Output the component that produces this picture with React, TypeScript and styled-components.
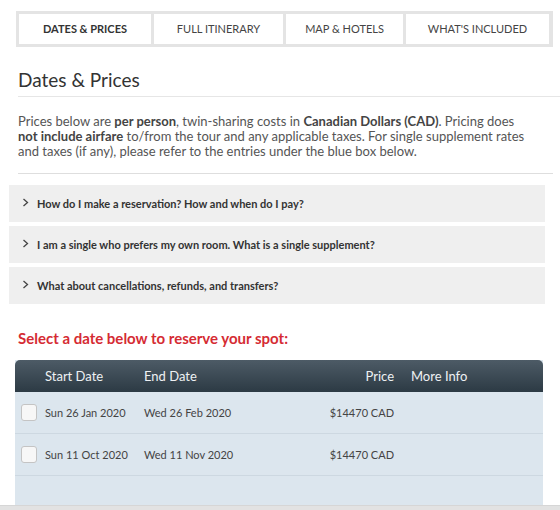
import React, { useState } from 'react'
import styled, { createGlobalStyle } from 'styled-components'

const GlobalStyle = createGlobalStyle`
  html, body {
    margin: 0;
    padding: 0;
    background: #fff;
    font-family: Lato, "Open Sans", Arial, sans-serif;
  }
`

const Page = styled.div`
  width: 560px;
  height: 505px;
  overflow: hidden;
  display: flex;
  flex-direction: column;
`

const BottomBar = styled.div`
  height: 5px;
  background: #e2e2e2;
  border-top: 1px solid #d6d6d6;
  box-sizing: border-box;
`

const Tabs = styled.nav`
  display: flex;
  gap: 3px;
  padding: 3px;
  margin: 11px 0 0 16px;
  width: 537px;
  box-sizing: border-box;
  background: #e4e4e4;
`

const Tab = styled.button<{ $active?: boolean; $w: number }>`
  width: ${p => p.$w}px;
  height: 30px;
  border: 0;
  padding: 0 0 2px;
  background: #fff;
  font-family: Lato, sans-serif;
  font-size: 11px;
  text-transform: uppercase;
  font-weight: ${p => (p.$active ? 700 : 400)};
  color: ${p => (p.$active ? '#333' : '#444')};
  cursor: pointer;
`

const Section = styled.section`
  margin: 0 7px 0 18px;
`

const Title = styled.h2`
  margin: 21px -7px 0 0;
  padding-bottom: 5px;
  font-size: 19px;
  line-height: 23px;
  font-weight: 400;
  color: #333;
  border-bottom: 1px solid #e6e6e6;
`

const Intro = styled.p`
  margin: 17px 0 0;
  padding: 0 20px 14px 0;
  font-size: 13px;
  line-height: 15px;
  color: #555;
  border-bottom: 1px solid #dedede;
  b {
    color: #444;
  }
`

const Faq = styled.div`
  display: flex;
  flex-direction: column;
  gap: 4px;
  margin: 11px 0 0 9px;
  width: 536px;
`

const FaqItem = styled.div`
  height: 37px;
  display: flex;
  align-items: center;
  gap: 8px;
  padding-left: 13px;
  background: #efefef;
  font-size: 11px;
  font-weight: 700;
  color: #333;
  cursor: pointer;
`

const Chevron = styled.svg`
  width: 7px;
  height: 9px;
  margin-top: -3px;
`

const Reserve = styled.h3`
  margin: 25px 0 0 18px;
  font-size: 15px;
  line-height: 18px;
  font-weight: 700;
  color: #d52b33;
`

const Table = styled.div`
  margin: 13px 0 0 15px;
  width: 528px;
  background: #dce6ee;
`

const cols = '30px 99px 136px 114px 1fr'

const HeadRow = styled.div`
  display: grid;
  grid-template-columns: ${cols};
  align-items: center;
  height: 32px;
  border-radius: 5px 5px 0 0;
  background: linear-gradient(#4d5b66, #2c3a44);
  color: #eef1f3;
  font-size: 13px;
`

const Row = styled.div`
  display: grid;
  grid-template-columns: ${cols};
  align-items: center;
  height: 41px;
  border-bottom: 1px solid #cdd8e1;
  font-size: 11px;
  color: #444;
`

const EmptyRow = styled.div`
  height: 40px;
`

const Cell = styled.div<{ $right?: boolean; $pad?: number }>`
  text-align: ${p => (p.$right ? 'right' : 'left')};
  padding-left: ${p => p.$pad ?? 0}px;
`

const Check = styled.span<{ $on: boolean }>`
  display: block;
  width: 14px;
  height: 15px;
  margin-left: 6px;
  border: 1px solid #c4c4c4;
  border-radius: 3px;
  background: ${p => (p.$on ? '#4d5b66' : '#f7f7f7')};
  cursor: pointer;
`

const tabs = [
  { label: 'Dates & Prices', w: 132 },
  { label: 'Full Itinerary', w: 129 },
  { label: 'Map & Hotels', w: 117 },
  { label: "What's Included", w: 143 },
]

const questions = [
  'How do I make a reservation? How and when do I pay?',
  'I am a single who prefers my own room. What is a single supplement?',
  'What about cancellations, refunds, and transfers?',
]

const departures = [
  { start: 'Sun 26 Jan 2020', end: 'Wed 26 Feb 2020', price: '$14470 CAD' },
  { start: 'Sun 11 Oct 2020', end: 'Wed 11 Nov 2020', price: '$14470 CAD' },
]

const App: React.FC = () => {
  const [picked, setPicked] = useState<number | null>(null)

  return (
    <>
      <GlobalStyle />
      <Page>
        <Tabs>
          {tabs.map((t, i) => (
            <Tab key={t.label} $w={t.w} $active={i === 0}>
              {t.label}
            </Tab>
          ))}
        </Tabs>

        <Section>
          <Title>Dates &amp; Prices</Title>
          <Intro>
            Prices below are <b>per person</b>, twin-sharing costs in <b>Canadian Dollars (CAD)</b>.
            Pricing does <b>not include airfare</b> to/from the tour and any applicable taxes. For
            single supplement rates and taxes (if any), please refer to the entries under the blue
            box below.
          </Intro>
        </Section>

        <Faq>
          {questions.map(q => (
            <FaqItem key={q}>
              <Chevron viewBox="0 0 7 9">
                <path d="M1.5 1 L5.5 4.5 L1.5 8" fill="none" stroke="#444" strokeWidth="1.3" />
              </Chevron>
              {q}
            </FaqItem>
          ))}
        </Faq>

        <Reserve>Select a date below to reserve your spot:</Reserve>

        <Table>
          <HeadRow>
            <Cell />
            <Cell>Start Date</Cell>
            <Cell>End Date</Cell>
            <Cell $right>Price</Cell>
            <Cell $pad={17}>More Info</Cell>
          </HeadRow>
          {departures.map((d, i) => (
            <Row key={d.start}>
              <Cell>
                <Check $on={picked === i} onClick={() => setPicked(picked === i ? null : i)} />
              </Cell>
              <Cell>{d.start}</Cell>
              <Cell>{d.end}</Cell>
              <Cell $right>{d.price}</Cell>
              <Cell />
            </Row>
          ))}
          <EmptyRow />
        </Table>
      </Page>
      <BottomBar />
    </>
  )
}

export default App
